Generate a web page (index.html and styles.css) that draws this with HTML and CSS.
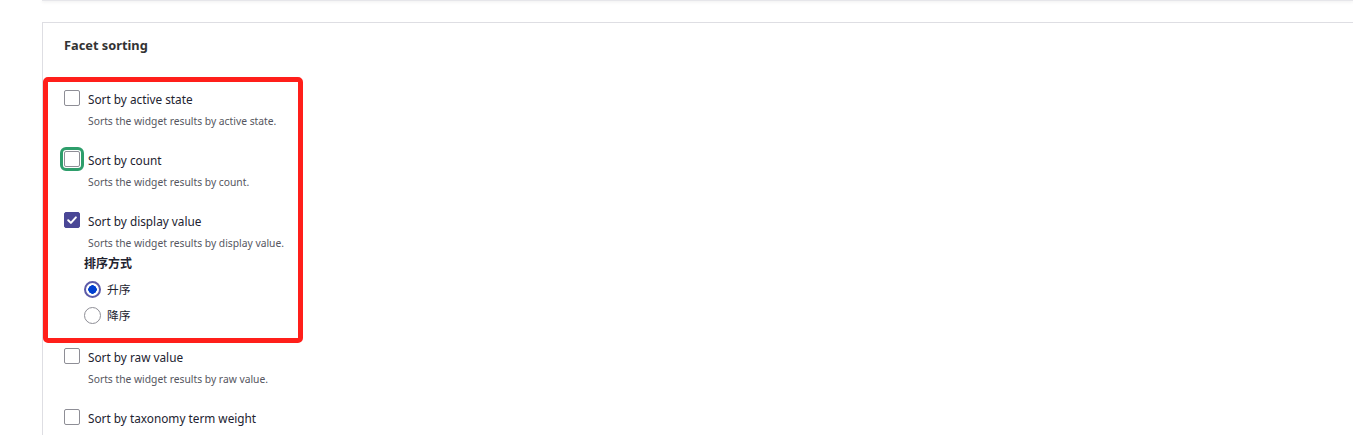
FILE: index.html
```html
<!DOCTYPE html>
<html lang="en">
<head>
<meta charset="utf-8">
<title>Facet sorting</title>
<link rel="stylesheet" href="styles.css">
</head>
<body>
<div class="page">
  <div class="prev-card"></div>
  <section class="card">
    <h2 class="card-title">Facet sorting</h2>
    <div class="items">
      <div class="item">
        <label class="row"><span class="cb"></span><span class="label">Sort by active state</span></label>
        <div class="desc">Sorts the widget results by active state.</div>
      </div>
      <div class="item">
        <label class="row"><span class="cb focus"></span><span class="label">Sort by count</span></label>
        <div class="desc">Sorts the widget results by count.</div>
      </div>
      <div class="item">
        <label class="row"><span class="cb checked"><svg viewBox="0 0 16 16" width="16" height="16"><path d="M4.2 8.3 L6.9 10.9 L11.9 5.4" fill="none" stroke="#fff" stroke-width="2" stroke-linecap="round" stroke-linejoin="round"/></svg></span><span class="label">Sort by display value</span></label>
        <div class="desc">Sorts the widget results by display value.</div>
        <div class="sub">
          <div class="sub-title">排序方式</div>
          <label class="radio-row"><span class="radio checked"></span><span class="label">升序</span></label>
          <label class="radio-row"><span class="radio"></span><span class="label">降序</span></label>
        </div>
      </div>
      <div class="item">
        <label class="row"><span class="cb"></span><span class="label">Sort by raw value</span></label>
        <div class="desc">Sorts the widget results by raw value.</div>
      </div>
      <div class="item">
        <label class="row"><span class="cb"></span><span class="label">Sort by taxonomy term weight</span></label>
      </div>
    </div>
  </section>
  <div class="highlight"></div>
</div>
</body>
</html>
```

FILE: styles.css
```css
html, body {
  margin: 0;
  padding: 0;
  background: #fff;
}
body {
  font-family: "Noto Sans", "Noto Sans CJK SC", sans-serif;
  color: #222330;
  overflow: hidden;
  height: 435px;
}
.page {
  position: relative;
  padding-left: 42px;
}
.prev-card {
  height: 1px;
  background: #e6e6ea;
  box-shadow: 0 1px 3px rgba(0, 0, 0, 0.12);
}
.card {
  margin-top: 21px;
  border: 1px solid #dedee3;
  border-right: none;
  padding: 12px 21px 0;
  min-height: 460px;
}
.card-title {
  margin: 0;
  font-size: 12.8px;
  font-weight: 700;
  line-height: 20px;
  color: #333;
}
.items {
  margin-top: 34px;
}
.item {
  margin-bottom: 21px;
}
.row {
  display: flex;
  align-items: center;
  height: 20px;
}
.cb {
  box-sizing: border-box;
  width: 16px;
  height: 16px;
  border: 1px solid #8e8e96;
  border-radius: 2px;
  margin-right: 8px;
  margin-top: -3px;
  flex: none;
  display: flex;
}
.cb.focus {
  outline: 3px solid #2e9e6b;
  outline-offset: 1px;
  border-radius: 2px;
}
.cb.checked {
  background: #4a4796;
  border-color: #4a4796;
}
.cb.checked svg {
  margin: -1px;
}
.label {
  font-size: 11.8px;
  line-height: 20px;
}
.desc {
  margin-top: 4px;
  padding-left: 24px;
  font-size: 10.3px;
  line-height: 16px;
  color: #555660;
}
.sub {
  padding-left: 20px;
  margin-top: 3px;
  margin-bottom: -2px;
}
.sub-title {
  font-size: 12px;
  font-weight: 700;
  line-height: 20px;
}
.radio-row {
  display: flex;
  align-items: center;
  height: 26px;
}
.radio-row:first-of-type {
  margin-top: 2px;
}
.radio {
  box-sizing: border-box;
  width: 17px;
  height: 17px;
  border-radius: 50%;
  border: 1px solid #8e8e96;
  margin-right: 6px;
  flex: none;
}
.radio.checked {
  border: 2px solid #5d5ba8;
  background: radial-gradient(circle, #0040d0 0 4px, #fff 4.5px);
}
.highlight {
  position: absolute;
  left: 43px;
  top: 77px;
  width: 250px;
  height: 256px;
  border: 5px solid #ff1f1a;
  border-radius: 5px;
}
```
